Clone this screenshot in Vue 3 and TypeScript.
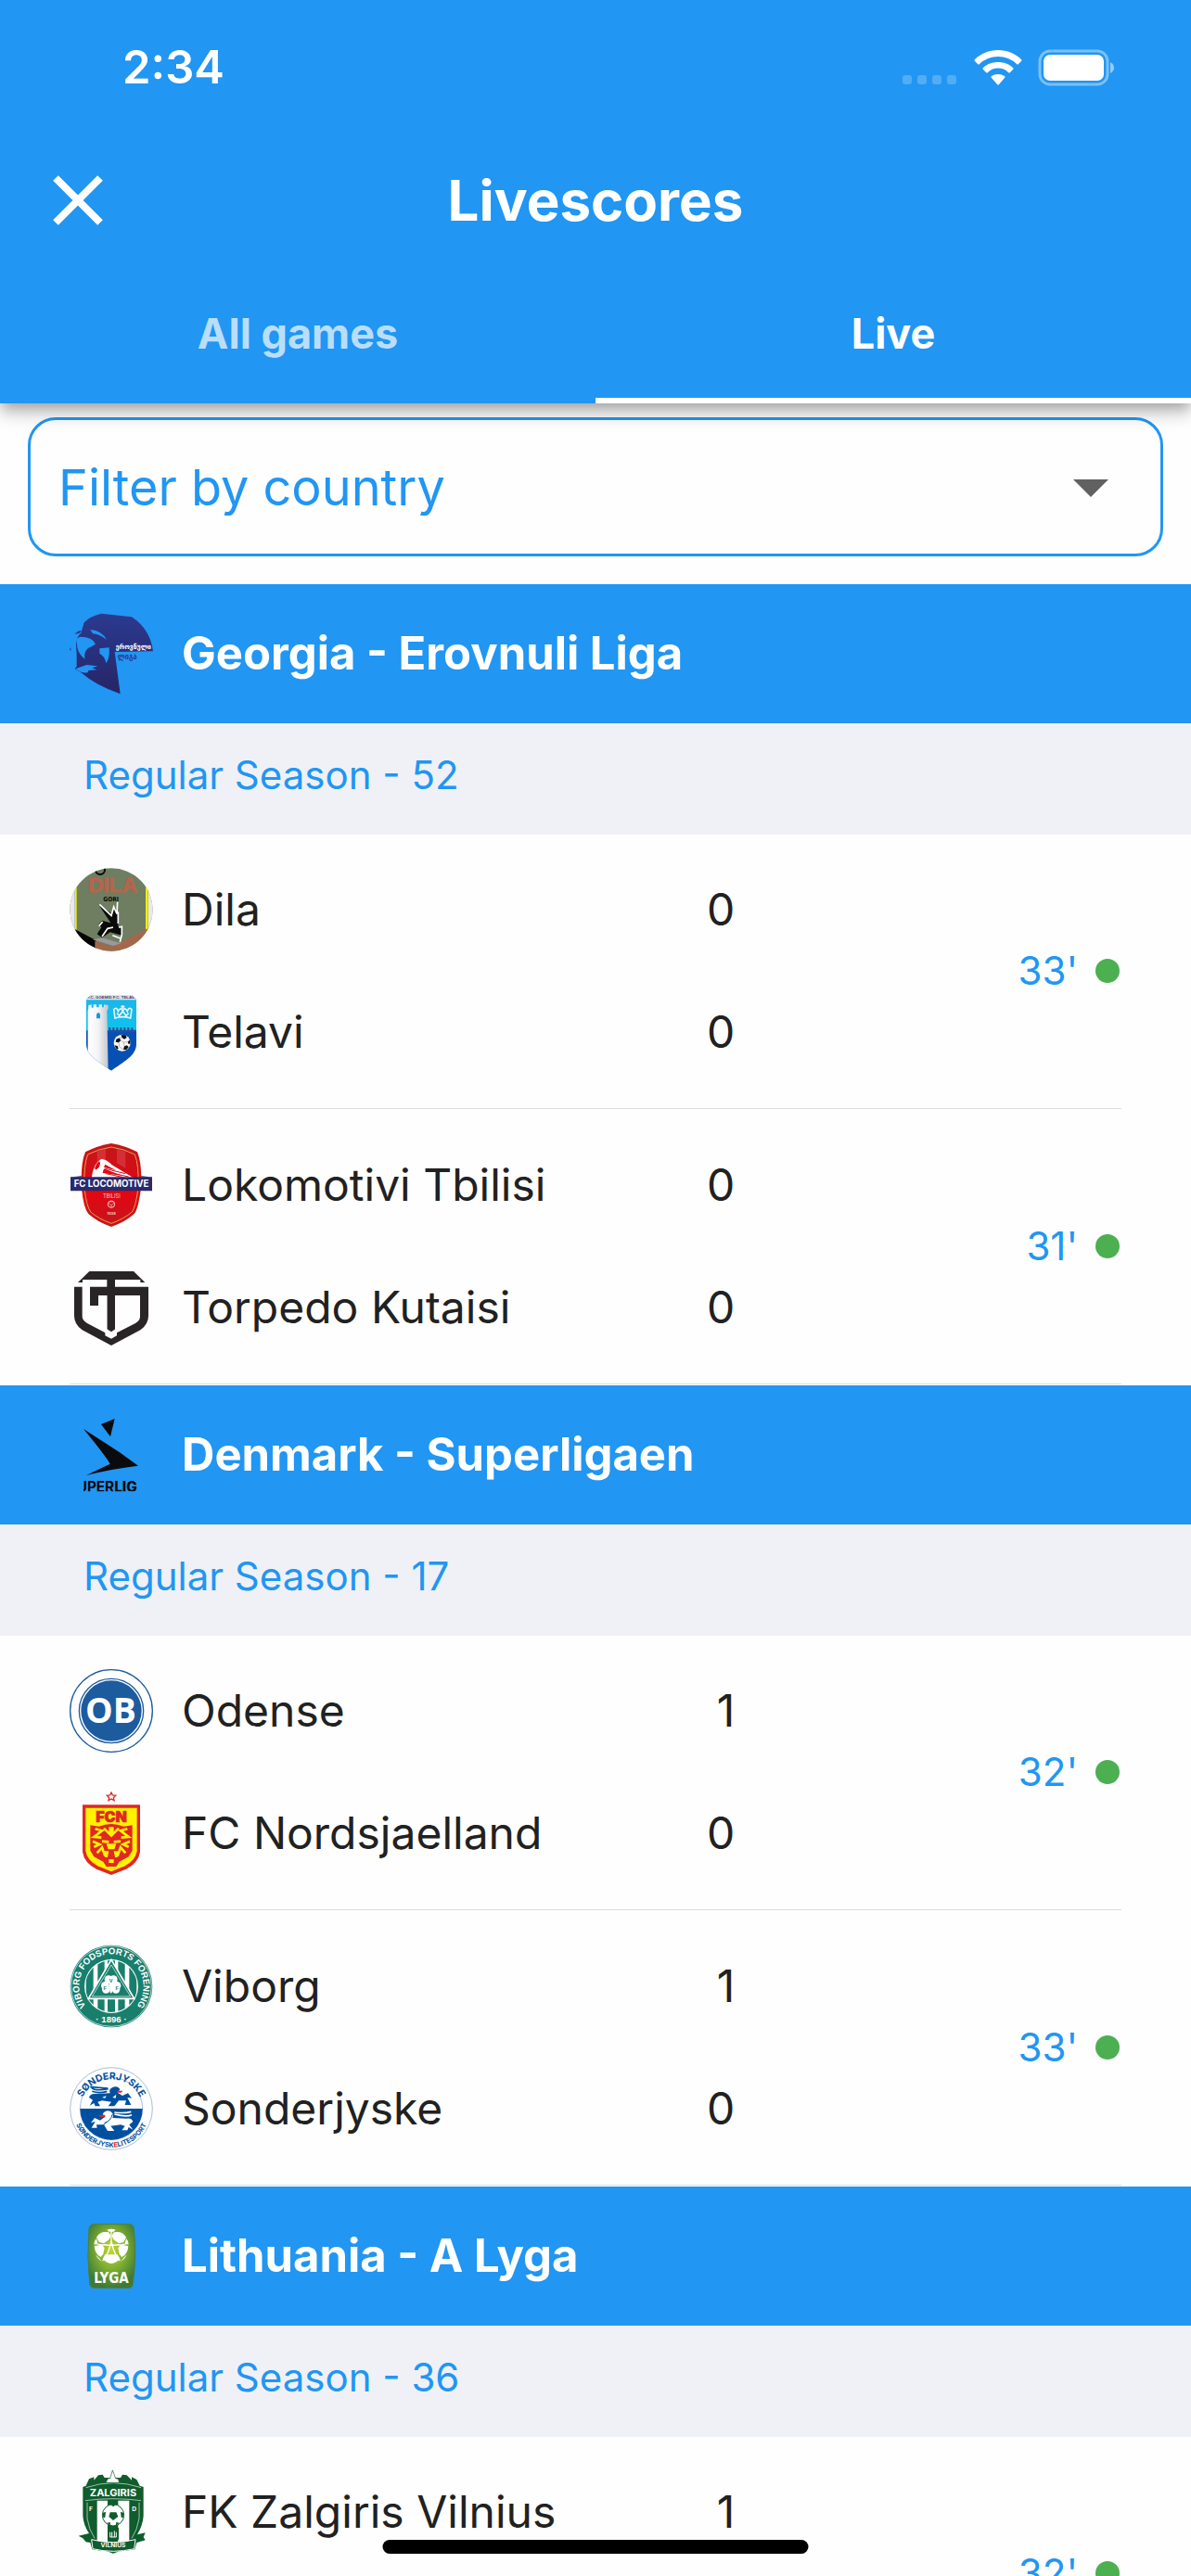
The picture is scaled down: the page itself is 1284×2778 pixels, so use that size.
<script setup lang="ts">
import { ref } from 'vue'

interface Team {
  name: string
  crest: string
  score: number
}

interface Match {
  minute: number
  teams: Team[]
}

interface League {
  title: string
  crest: string
  round: string
  matches: Match[]
}

const tabs = ['All games', 'Live']
const activeTab = ref('Live')
const country = ref('')

// Each crest is drawn on a 270-unit square with its own origin.
const crestViews: Record<string, string> = {
  erovnuli: '75 90 270 270',
  superliga: '45 72 270 270',
  alyga: '45 54 270 270',
  dila: '45 48 270 270',
  telavi: '45 444 270 270',
  lokomotivi: '45 54 270 270',
  torpedo: '45 450 270 270',
  odense: '45 45 270 270',
  nordsjaelland: '45 441 270 270',
  viborg: '45 51 270 270',
  sonderjyske: '45 447 270 270',
  zalgiris: '45 42 270 270',
}

const leagues: League[] = [
  {
    title: 'Georgia - Erovnuli Liga',
    crest: 'erovnuli',
    round: 'Regular Season - 52',
    matches: [
      {
        minute: 33,
        teams: [
          { name: 'Dila', crest: 'dila', score: 0 },
          { name: 'Telavi', crest: 'telavi', score: 0 },
        ],
      },
      {
        minute: 31,
        teams: [
          { name: 'Lokomotivi Tbilisi', crest: 'lokomotivi', score: 0 },
          { name: 'Torpedo Kutaisi', crest: 'torpedo', score: 0 },
        ],
      },
    ],
  },
  {
    title: 'Denmark - Superligaen',
    crest: 'superliga',
    round: 'Regular Season - 17',
    matches: [
      {
        minute: 32,
        teams: [
          { name: 'Odense', crest: 'odense', score: 1 },
          { name: 'FC Nordsjaelland', crest: 'nordsjaelland', score: 0 },
        ],
      },
      {
        minute: 33,
        teams: [
          { name: 'Viborg', crest: 'viborg', score: 1 },
          { name: 'Sonderjyske', crest: 'sonderjyske', score: 0 },
        ],
      },
    ],
  },
  {
    title: 'Lithuania - A Lyga',
    crest: 'alyga',
    round: 'Regular Season - 36',
    matches: [
      {
        minute: 32,
        teams: [{ name: 'FK Zalgiris Vilnius', crest: 'zalgiris', score: 1 }],
      },
    ],
  },
]
</script>

<template>
  <div class="screen">
    <svg class="defs" aria-hidden="true">
      <defs>
        <linearGradient id="g-head" x1="0" y1="0" x2="0" y2="1">
          <stop offset="0" stop-color="#2b3a90" />
          <stop offset="1" stop-color="#262566" />
        </linearGradient>
        <linearGradient id="g-tower" x1="0" y1="0" x2="1" y2="0">
          <stop offset="0" stop-color="#fff" />
          <stop offset="0.5" stop-color="#f4f4f6" />
          <stop offset="1" stop-color="#c3c6cc" />
        </linearGradient>
        <linearGradient id="g-sky" x1="0" y1="0" x2="0" y2="1">
          <stop offset="0" stop-color="#1db4e6" />
          <stop offset="1" stop-color="#0cc4ee" />
        </linearGradient>
        <linearGradient id="g-red" x1="0" y1="0" x2="0" y2="1">
          <stop offset="0" stop-color="#c4161c" />
          <stop offset="0.6" stop-color="#e30613" />
          <stop offset="1" stop-color="#c4161c" />
        </linearGradient>
        <radialGradient id="g-lyga" cx="0.5" cy="0.4" r="0.6">
          <stop offset="0" stop-color="#c4d82e" />
          <stop offset="0.5" stop-color="#7fb032" />
          <stop offset="1" stop-color="#3f7a34" />
        </radialGradient>
        <clipPath id="c-dila"><circle cx="180" cy="183" r="134" /></clipPath>
        <clipPath id="c-telavi">
          <path d="M114 459H246L261 473V618C261 656 218 676 180 704C142 676 99 656 99 618V473Z" />
        </clipPath>
        <clipPath id="c-viborg"><circle cx="180" cy="186" r="84" /></clipPath>
        <clipPath id="c-super"><path d="M90 72H272V325H90Z" /></clipPath>
        <clipPath id="c-zal">
          <path d="M98 128Q186 104 274 128V210Q268 262 230 280H142Q104 262 98 210Z" />
        </clipPath>
        <path id="p-viborg" d="M180 290A104 104 0 0 1 180 82A104 104 0 0 1 180 290" />
        <path id="p-sonder-top" d="M77 590A103 103 0 1 1 283 590" />
        <path id="p-sonder-low" d="M55 582A125 125 0 0 0 305 582" />
      </defs>
    </svg>

    <header class="top">
      <div class="status">
        <time class="clock">2:34</time>
        <div class="indicators" aria-hidden="true">
          <svg class="signal" viewBox="0 0 60 12">
            <rect v-for="n in 4" :key="n" :x="(n - 1) * 16" y="0" width="10" height="10" rx="3" fill="#fff" fill-opacity="0.22" />
          </svg>
          <svg class="wifi" viewBox="0 0 52 38">
            <path fill="#fff" d="M26 0C36 0 45 4 51 10Q52 11 51 12L48 15Q47 16 46 15A29 29 0 0 0 6 15Q5 16 4 15L1 12Q0 11 1 10C7 4 16 0 26 0ZM26 13C32 13 38 15 42 19Q43 20 42 21L39 24Q38 25 37 24A16 16 0 0 0 15 24Q14 25 13 24L10 21Q9 20 10 19C14 15 20 13 26 13ZM26 26Q30 26 33 28Q34 29 33 30L27 37Q26 38 25 37L19 30Q18 29 19 28Q22 26 26 26Z" />
          </svg>
          <svg class="battery" viewBox="0 0 82 40">
            <rect x="2" y="2" width="73" height="36" rx="11" fill="none" stroke="#fff" stroke-opacity="0.4" stroke-width="3" />
            <rect x="6" y="6" width="65" height="28" rx="7" fill="#fff" />
            <path d="M78 14Q82 16 82 20Q82 24 78 26Z" fill="#fff" fill-opacity="0.5" />
          </svg>
        </div>
      </div>

      <div class="bar">
        <button class="close" type="button" aria-label="Close">
          <svg viewBox="0 0 54 54"><path d="M3 3L51 51M51 3L3 51" stroke="#fff" stroke-width="8" /></svg>
        </button>
        <h1 class="title">Livescores</h1>
      </div>

      <nav class="tabs" role="tablist">
        <button
          v-for="tab in tabs"
          :key="tab"
          class="tab"
          :class="{ active: tab === activeTab }"
          type="button"
          role="tab"
          :aria-selected="tab === activeTab"
          @click="activeTab = tab"
        >
          {{ tab }}
        </button>
      </nav>
    </header>

    <main class="content">
      <div class="filter">
        <select v-model="country" class="country" aria-label="Filter by country">
          <option value="">Filter by country</option>
          <option value="georgia">Georgia</option>
          <option value="denmark">Denmark</option>
          <option value="lithuania">Lithuania</option>
        </select>
        <svg class="arrow" viewBox="0 0 38 19" aria-hidden="true"><path d="M0 0H38L19 19Z" fill="#616161" /></svg>
      </div>

      <section v-for="league in leagues" :key="league.title">
        <h2 class="league">
          <svg class="crest" :viewBox="crestViews[league.crest]" aria-hidden="true">
            <template v-if="league.crest === 'erovnuli'">
              <path fill="url(#g-head)" d="M122 124Q140 104 178 95L276 106Q336 146 345 217L221 219L239 355Q160 328 112 286L92 274L98 266V228L96 196Q98 168 112 158Z" />
              <path fill="#2b3a90" d="M92 162Q100 150 114 150L108 158ZM75 211L79 204V217Z" />
              <path fill="#2196f3" d="M108 170Q150 170 159 194L146 202Q120 210 124 242Q104 226 100 204L97 178ZM142 147Q180 150 195 180Q170 160 150 160ZM172 208L203 205Q206 240 193 256Q190 234 172 224ZM94 274L130 261L166 265L148 271L163 277L136 279L134 286Q114 290 94 274Z" />
              <text x="224" y="210" font-size="23" font-weight="700" fill="#fff" font-family="'DejaVu Sans Condensed', 'DejaVu Sans', sans-serif">ეროვნული</text>
              <text x="230" y="244" font-size="25" fill="#2b3a90" font-family="'DejaVu Sans Condensed', 'DejaVu Sans', sans-serif">ლიგა</text>
            </template>

            <template v-else-if="league.crest === 'superliga'">
              <path fill="#0b0b0d" d="M147 108L191 90L177 148ZM90 123L207 199L267 242Q180 252 99 273L176 236Q160 208 90 123Z" />
              <g clip-path="url(#c-super)">
                <text x="68" y="326" font-size="46" fill="#0b0b0d" font-family="Inter, sans-serif">UPER<tspan font-weight="800">LIG</tspan></text>
              </g>
            </template>

            <template v-else-if="league.crest === 'alyga'">
              <path fill="url(#g-lyga)" stroke="#4c7f3c" stroke-width="3" d="M124 86H238Q252 86 253 100Q262 190 250 278Q248 292 236 292H126Q112 292 110 278Q100 190 108 100Q110 86 124 86Z" />
              <path fill="#fff" d="M166 104Q180 98 194 104L188 110H172ZM132 128Q144 106 172 112L178 122L174 134L156 148L140 144ZM228 128Q216 106 188 112L182 122L186 134L204 148L220 144ZM124 152Q124 140 132 132L136 148ZM236 152Q236 140 228 132L224 148ZM125 156L150 152L158 162L154 182L146 192Q126 182 125 156ZM235 156L210 152L202 162L206 182L214 192Q234 182 235 156ZM160 184H200L208 198Q196 212 180 213Q164 212 152 198ZM130 184L150 206Q136 200 130 184ZM230 184L210 206Q224 200 230 184Z" />
              <path fill="none" stroke="#fff" stroke-width="4" d="M180 104V140M180 140Q174 178 152 204M180 140Q186 178 208 204M126 148Q160 158 206 152M234 148Q200 158 154 152" />
              <text x="180" y="277" text-anchor="middle" font-size="45" font-weight="700" fill="#fff" font-family="'DejaVu Sans Condensed', sans-serif">LYGA</text>
            </template>
          </svg>
          {{ league.title }}
        </h2>
        <p class="round">{{ league.round }}</p>
        <ul class="matches">
          <li v-for="match in league.matches" :key="match.teams[0].name" class="match">
            <div class="teams">
              <div v-for="team in match.teams" :key="team.name" class="team">
                <svg class="crest" :viewBox="crestViews[team.crest]" aria-hidden="true">
                  <template v-if="team.crest === 'dila'">
                    <g clip-path="url(#c-dila)">
                      <path fill="#6f7d61" d="M45 48H315V318H45Z" />
                      <path fill="#e9e9ec" d="M45 48H62V318H45ZM300 48H315V318H300Z" />
                      <path fill="#f4ee10" d="M63 48H68V318H63ZM291 48H299V318H291Z" />
                      <path fill="#050505" d="M62 246L130 282V318H62Z" />
                      <path fill="#a5674c" d="M127 284L180 304L298 244V286L220 318H127Z" />
                      <circle cx="144" cy="54" r="15" fill="none" stroke="#0a0a0a" stroke-width="6" />
                      <g text-anchor="middle" font-size="68" font-weight="700" font-family="'Liberation Sans', sans-serif">
                        <text x="184" y="126" fill="#b5654d" stroke="#b5654d" stroke-width="3">DILA</text>
                      </g>
                      <text x="179" y="157" text-anchor="middle" font-size="20" font-weight="700" fill="#0a0a0a" font-family="'DejaVu Sans Condensed', sans-serif">GORI</text>
                      <path fill="#999" d="M120 280L150 274L212 292L186 300Z" />
                      <path fill="#0a0a0a" d="M140 168L182 196L188 172L202 190V236L214 242V266L176 256L150 274L134 262L148 240L138 232L150 218L178 226Z" />
                      <path fill="none" stroke="#fff" stroke-width="5" d="M142 166L180 202L188 174L198 196L200 158M202 190V228M150 270L168 244L186 240M204 240L214 238V264L208 288M152 222L140 236M184 266L210 276" />
                    </g>
                  </template>

                  <template v-else-if="team.crest === 'telavi'">
                    <g clip-path="url(#c-telavi)">
                      <path fill="url(#g-sky)" d="M99 459H262V580H99Z" />
                      <path fill="#0650b5" d="M168 574H262V706H99V574Z" />
                      <path fill="#dfe3ea" d="M99 459H262V475H99Z" />
                      <path fill="#2a4c9b" d="M172 574V564H178V572H184V564H190V572H196V564H202V572H208V564H214V572H220V564H226V572H232V564H238V572H244V564H250V572H262V580H172Z" />
                      <path fill="url(#g-tower)" d="M106 492L116 490V500H122V490H132V499H140V490H150V499H156V490L170 492V504L166 510L170 706L104 670V510L106 504Z" />
                      <path fill="#0d9ed8" d="M132 535V522Q138 510 144 522V535Z" />
                      <text x="180" y="472" text-anchor="middle" font-size="13" font-weight="700" fill="#33416e" font-family="'Liberation Sans', sans-serif">F.C. GOEMID F.C. TELAVI</text>
                    </g>
                    <path fill="none" stroke="#e9f6fc" stroke-width="5" d="M192 534Q218 526 242 534L246 506Q236 496 232 512Q224 496 217 510Q210 496 202 512Q198 496 188 506ZM217 504V492M211 497H223M198 518L206 526L217 512L228 526L236 518" />
                    <circle cx="215" cy="614" r="27" fill="#f6f6f6" />
                    <path fill="#111" d="M196 602L206 598L211 606L204 613L194 611ZM212 588L226 589L230 597L222 602L214 597ZM222 625L231 622L236 628L228 637L219 635ZM240 604L242 616L236 618L233 611ZM190 622L200 624L203 632L198 635Z" />
                    <path fill="none" stroke="#999" stroke-width="2" d="M211 606L220 612L222 625M220 612L233 611M204 613L206 626L219 635M206 598L214 597" />
                  </template>

                  <template v-else-if="team.crest === 'lokomotivi'">
                    <path fill="url(#g-red)" d="M180 54Q226 62 264 82Q280 120 276 200Q266 270 254 282Q226 308 180 324Q134 308 106 282Q90 262 84 200Q80 120 96 82Q134 62 180 54Z" />
                    <path fill="none" stroke="#d8a54a" stroke-width="3" d="M180 66Q222 72 256 90Q270 124 267 200Q258 262 247 276Q222 298 180 313Q138 298 113 276Q100 258 93 200Q90 124 104 90Q138 72 180 66Z" />
                    <path fill="#d8434a" opacity="0.6" d="M134 80L162 72V118L134 112ZM198 72L226 80V134L198 118Z" />
                    <path fill="#fff" d="M116 166Q122 118 148 104Q166 106 182 124L252 166Z" />
                    <path fill="#dc0a16" d="M126 134Q132 118 140 112Q148 116 140 132L130 140ZM152 150L156 136L214 158ZM156 132L160 122L196 142Z" />
                    <path stroke="#dc0a16" stroke-width="3" d="M154 144L236 162M160 136L226 152M162 152L220 164" />
                    <path fill="#6f7078" d="M48 164L84 158V166ZM312 164L276 158V166Z" />
                    <path fill="#2a2a6c" d="M48 163H312V208H48Z" />
                    <text x="180" y="196" text-anchor="middle" font-size="29" font-weight="700" fill="#fff" font-family="Inter, sans-serif">FC LOCOMOTIVE</text>
                    <text x="181" y="230" text-anchor="middle" font-size="17" fill="#f6c9c9" font-family="Inter, sans-serif">TBILISI</text>
                    <circle cx="180" cy="251" r="11" fill="none" stroke="#f6c9c9" stroke-width="3" />
                    <path fill="none" stroke="#f6c9c9" stroke-width="2" d="M170 247L180 254L190 247M180 254V262M174 243H186" />
                    <text x="180" y="284" text-anchor="middle" font-size="12" font-weight="700" fill="#f6c9c9" font-family="Inter, sans-serif">1936</text>
                  </template>

                  <template v-else-if="team.crest === 'torpedo'">
                    <path fill="#292526" d="M109 468H252L289 504H274V495H192V518H300V612Q300 640 274 658L180 708L86 658Q60 640 60 612V518H86V616Q88 628 102 636L166 670V546H138V579H111V518H166V495H87V504H72ZM192 546V670L258 636Q272 628 273 616V546Z" />
                    <path fill="#fefefe" d="M160 546H166V655L180 664L193 655V546H198V676L180 686L160 676Z" />
                  </template>

                  <template v-else-if="team.crest === 'odense'">
                    <circle cx="180" cy="180" r="133" fill="#fefefe" stroke="#1d5b9f" stroke-width="4" />
                    <circle cx="180" cy="180" r="104" fill="#fefefe" stroke="#1d5b9f" stroke-width="4" />
                    <circle cx="180" cy="180" r="98" fill="#1d5b9f" />
                    <text x="178" y="219" text-anchor="middle" font-size="112" font-weight="700" fill="#fff" font-family="'Open Sans', sans-serif">OB</text>
                  </template>

                  <template v-else-if="team.crest === 'nordsjaelland'">
                    <path fill="none" stroke="#d92b2b" stroke-width="4" d="M180 444L184 453L194 454L187 461L189 470L180 465L171 470L173 461L166 454L176 453Z" />
                    <path fill="#e02726" d="M87 484H273V636Q268 672 228 692L180 711L132 692Q92 672 87 636Z" />
                    <path fill="#fff200" d="M97 494H263V634Q258 664 224 682L180 700L136 682Q102 664 97 634Z" />
                    <text x="180" y="539" text-anchor="middle" font-size="48" font-weight="900" fill="#e02726" stroke="#e02726" stroke-width="2" font-family="Inter, sans-serif">FCN</text>
                    <path fill="#e02726" d="M112 550L140 554Q180 538 220 554L248 550V632L236 652L206 668L196 684H164L154 668L124 652L112 632Z" />
                    <path fill="none" stroke="#fff200" stroke-width="8" d="M128 562L150 568L124 588L148 590M232 562L210 568L236 588L212 590M156 560L176 580V556M204 560L184 580V556M120 602L142 612L124 620M240 602L218 612L236 620M150 602L172 604M210 602L188 604M134 640L150 622L160 650M226 640L210 622L200 650" />
                    <path fill="#fff200" d="M164 610H196L190 628H170ZM156 634H172L168 654H160ZM188 634H204L200 654H192ZM172 660H188V672H172Z" />
                  </template>

                  <template v-else-if="team.crest === 'viborg'">
                    <circle cx="180" cy="186" r="133" fill="#197f6d" />
                    <circle cx="180" cy="186" r="130" fill="none" stroke="#fefefe" stroke-width="2" />
                    <circle cx="180" cy="186" r="87" fill="#fefefe" />
                    <path clip-path="url(#c-viborg)" fill="#197f6d" d="M98 102H122V230H98ZM136 102H158V270H136ZM168 102H192V270H168ZM202 102H224V270H202ZM238 102H262V230H238ZM108 230H122V270H108ZM238 230H252V270H238Z" />
                    <path fill="#197f6d" stroke="#fefefe" stroke-width="5" d="M180 100L254 226H106Z" />
                    <path fill="none" stroke="#fefefe" stroke-width="2" d="M180 117L242 219H118Z" />
                    <g fill="#fefefe">
                      <circle cx="171" cy="164" r="13" /><circle cx="187" cy="164" r="13" />
                      <circle cx="160" cy="184" r="13" /><circle cx="163" cy="196" r="13" />
                      <circle cx="198" cy="184" r="13" /><circle cx="195" cy="196" r="13" />
                      <path d="M170 160H190L186 190L182 208H176L174 190Z" />
                    </g>
                    <g fill="#197f6d" font-size="17" font-weight="700" font-family="'Liberation Sans', sans-serif" text-anchor="middle">
                      <text x="179" y="174">V</text>
                      <text x="160" y="198">F</text>
                      <text x="199" y="198">F</text>
                    </g>
                    <g fill="#fefefe" font-size="29" font-weight="700" font-family="'Liberation Sans', sans-serif" text-anchor="middle">
                      <text><textPath href="#p-viborg" startOffset="50%">VIBORG FODSPORTS FORENING</textPath></text>
                      <text x="180" y="302">· 1896 ·</text>
                    </g>
                  </template>

                  <template v-else-if="team.crest === 'sonderjyske'">
                    <circle cx="180" cy="582" r="133" fill="#fefefe" stroke="#7d9fcb" stroke-width="2" />
                    <circle cx="180" cy="582" r="101" fill="#fefefe" stroke="#7d9fcb" stroke-width="2" />
                    <path fill="#00509f" d="M79 582H281A101 101 0 0 1 79 582Z" />
                    <path fill="#00509f" d="M110 572L120 554L108 546Q112 532 130 534L176 532Q170 518 186 512Q202 508 208 520L200 530L216 540L234 532L246 548L232 546L244 570H224L228 556L204 556L190 574H170L180 560L150 556L136 560L144 574H128L124 564Z" />
                    <path fill="none" stroke="#00509f" stroke-width="5" d="M116 514Q128 526 170 518M112 512Q140 514 168 516M118 526Q140 534 166 526" />
                    <path fill="#fefefe" d="M184 546L196 536L194 548ZM150 546L164 540L160 548Z" />
                    <path fill="#e2231a" d="M198 524H217L212 530H200Z" />
                    <path fill="#fefefe" d="M250 650L238 634L250 624Q246 612 230 614L184 612Q190 598 176 590Q160 586 152 600L160 608L144 620L126 612L114 628L128 624L116 644H134L132 634L156 634L168 654H190L178 638L210 634L224 638L214 652H232L236 642Z" />
                    <path fill="none" stroke="#fefefe" stroke-width="5" d="M246 602Q230 610 190 600M244 592Q220 598 190 594" />
                    <path fill="none" stroke="#00509f" stroke-width="3" d="M184 600Q178 622 158 628M150 640L166 624" />
                    <path fill="#e2231a" d="M141 604L160 602V609L144 610Z" />
                    <g fill="#00509f" font-weight="700" font-family="Inter, sans-serif" text-anchor="middle">
                      <text font-size="31"><textPath href="#p-sonder-top" startOffset="50%">SØNDERJYSKE</textPath></text>
                      <text font-size="22"><textPath href="#p-sonder-low" startOffset="50%">SØNDERJYSK<tspan fill="#e2231a">E</tspan>LITESPORT</textPath></text>
                    </g>
                  </template>

                  <template v-else-if="team.crest === 'zalgiris'">
                    <path fill="#0f5c2c" d="M98 92L108 70L124 64V74L138 58L152 56L158 66H210L216 56L230 58L246 74V64L262 72L272 92L284 96V190Q282 220 264 250L290 244L284 258L290 268L262 276L256 298Q232 302 206 304L186 311L166 304Q140 302 118 298L112 276L98 274L88 262L74 254L108 246Q90 220 88 190V96Z" />
                    <path fill="#fefefe" clip-path="url(#c-zal)" d="M134 140H168V290H134ZM202 140H238V290H202Z" />
                    <path fill="none" stroke="#e6f0ea" stroke-width="2" d="M98 98Q186 68 276 98M96 140Q186 128 276 140M102 146V198Q108 236 126 262M270 146V198Q264 236 246 262" />
                    <path fill="#fefefe" stroke="#0f5c2c" stroke-width="2" d="M162 82L170 68H176L184 42L194 68L202 70L206 82Z" />
                    <circle cx="186" cy="187" r="35" fill="#fefefe" stroke="#0f5c2c" stroke-width="3" />
                    <path fill="#0f5c2c" d="M176 178H196L202 192L186 204L172 192ZM178 152L186 160L196 152ZM152 180L162 176L160 194L154 196ZM220 180L210 176L212 194L218 196ZM166 212L176 210L178 222ZM206 212L196 210L194 222Z" />
                    <path fill="#0f5c2c" d="M168 228H204V266H168Z" />
                    <path fill="none" stroke="#fefefe" stroke-width="3" d="M176 242V258H196V242M182 242V258M190 238V258" />
                    <path fill="#0f5c2c" stroke="#fefefe" stroke-width="3" d="M116 266Q186 284 258 266L254 296Q186 312 120 296Z" />
                    <g fill="#fff" font-weight="700" font-family="Inter, sans-serif" text-anchor="middle">
                      <text x="186" y="127" font-size="33">ZALGIRIS</text>
                      <text x="114" y="173" font-size="20">F</text>
                      <text x="254" y="173" font-size="20">D</text>
                      <text x="186" y="291" font-size="20">VILNIUS</text>
                    </g>
                  </template>
                </svg>
                <span class="name">{{ team.name }}</span>
                <span class="score">{{ team.score }}</span>
              </div>
            </div>
            <div class="minute">
              {{ match.minute }}'
              <i class="dot"></i>
            </div>
          </li>
        </ul>
      </section>
    </main>

    <div class="home-indicator"></div>
  </div>
</template>

<style>
body {
  background: #fefefe;
}
</style>

<style scoped>
.screen {
  display: flex;
  flex-direction: column;
  height: 100vh;
  overflow: hidden;
  background: #fefefe;
  color: #212121;
  font-family: Inter, 'Liberation Sans', sans-serif;
  font-size: 48px;
  line-height: 60px;
}

.defs {
  position: absolute;
  width: 0;
  height: 0;
}

button {
  border: 0;
  padding: 0;
  background: none;
  color: inherit;
  font: inherit;
}

.top {
  position: relative;
  z-index: 1;
  flex: none;
  background: #2196f3;
  color: #fff;
  box-shadow:
    0 6px 12px -3px rgba(0, 0, 0, 0.2),
    0 12px 15px rgba(0, 0, 0, 0.14),
    0 3px 30px rgba(0, 0, 0, 0.12);
}

.status {
  display: flex;
  align-items: center;
  justify-content: space-between;
  box-sizing: border-box;
  height: 141px;
  padding: 4px 83px 0 132px;
}

.clock {
  font-size: 49px;
  font-weight: 600;
}

.indicators {
  display: flex;
  align-items: center;
  gap: 17px;
}

.signal {
  align-self: flex-end;
  width: 60px;
  height: 12px;
}

.wifi {
  width: 52px;
  height: 38px;
}

.battery {
  width: 82px;
  height: 40px;
}

.bar {
  display: grid;
  grid-template-columns: 168px 1fr 168px;
  align-items: center;
  height: 150px;
}

.close {
  justify-self: center;
  width: 54px;
  height: 54px;
}

.close svg {
  display: block;
}

.title {
  margin: 0;
  font-size: 60px;
  font-weight: 700;
  text-align: center;
}

.tabs {
  display: flex;
}

.tab {
  flex: 1;
  height: 144px;
  border-bottom: 6px solid transparent;
  color: rgba(255, 255, 255, 0.7);
  font-size: 45px;
  font-weight: 700;
}

.tab.active {
  border-bottom-color: #fff;
  color: #fff;
}

.content {
  flex: 1;
  min-height: 0;
  overflow: hidden;
}

.filter {
  display: grid;
  align-items: center;
  margin: 15px 30px 30px;
}

.country,
.arrow {
  grid-area: 1 / 1;
}

.country {
  appearance: none;
  box-sizing: border-box;
  width: 100%;
  height: 150px;
  padding: 2px 120px 0 30px;
  border: 3px solid #2196f3;
  border-radius: 30px;
  background: transparent;
  color: #2196f3;
  font: inherit;
  font-size: 54px;
}

.arrow {
  justify-self: end;
  width: 38px;
  height: 19px;
  margin: 2px 59px 0 0;
  pointer-events: none;
}

.league {
  display: flex;
  align-items: center;
  gap: 31px;
  height: 150px;
  margin: 0;
  padding: 0 75px;
  background: #2196f3;
  color: #fff;
  font-size: 49px;
  font-weight: 700;
}

.crest {
  flex: none;
  width: 90px;
  height: 90px;
}

.round {
  box-sizing: border-box;
  height: 120px;
  margin: 0;
  padding: 26px 90px 0;
  background: #eff1f6;
  color: #2196f3;
  font-size: 42px;
}

.matches {
  margin: 0;
  padding: 0 75px;
  list-style: none;
}

.match {
  display: grid;
  grid-template-columns: 19fr 11fr;
  box-sizing: border-box;
  height: 296px;
  margin-bottom: 1px;
  border-bottom: 1px solid #dcdcdc;
}

.teams {
  display: flex;
  flex-direction: column;
  gap: 42px;
  padding-top: 36px;
}

.team {
  display: flex;
  align-items: center;
  gap: 31px;
}

.name {
  flex: 1;
}

.score {
  padding-right: 1px;
}

.minute {
  display: flex;
  align-items: center;
  justify-content: flex-end;
  gap: 19px;
  padding-bottom: 2px;
  color: #2196f3;
  font-size: 42px;
}

.dot {
  width: 26px;
  height: 26px;
  margin-right: 2px;
  border-radius: 50%;
  background: #4caf50;
}

.home-indicator {
  position: fixed;
  bottom: 24px;
  left: 50%;
  z-index: 2;
  width: 459px;
  height: 15px;
  border-radius: 8px;
  background: #000;
  transform: translateX(-50%);
}
</style>
